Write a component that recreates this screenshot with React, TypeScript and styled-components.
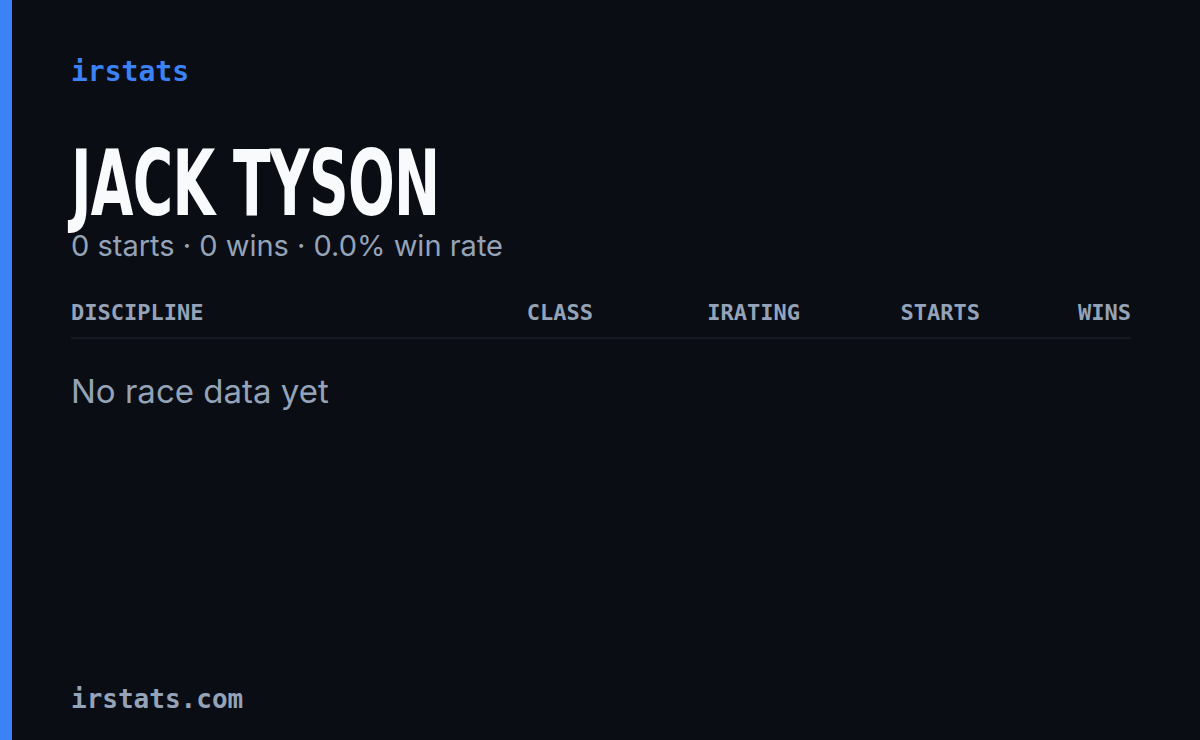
import React from 'react';
import styled, { createGlobalStyle } from 'styled-components';

const GlobalStyle = createGlobalStyle`
    html, body {
        margin: 0;
        padding: 0;
        background-color: #0a0d14;
    }
`;

const Page = styled.div`
    width: 1200px;
    height: 740px;
    display: flex;
    background-color: #0a0d14;
    overflow: hidden;
`;

const AccentBar = styled.div`
    width: 12px;
    flex-shrink: 0;
    background-color: #3b82f6;
`;

const Content = styled.div`
    flex: 1;
    display: flex;
    flex-direction: column;
    padding: 54px 69px 26px 59px;
`;

const Brand = styled.div`
    font-family: "DejaVu Sans Mono", monospace;
    font-weight: bold;
    font-size: 28px;
    color: #3b82f6;
    line-height: 36px;
`;

const Name = styled.h1`
    margin: 49px 0 0 0;
    font-family: "DejaVu Sans", sans-serif;
    font-stretch: condensed;
    font-weight: bold;
    font-size: 90px;
    line-height: 90px;
    color: #f8fafc;
    transform-origin: left center;
    transform: scaleX(0.68);
    white-space: nowrap;
    letter-spacing: -1px;
`;

const Summary = styled.div`
    font-family: Inter, sans-serif;
    font-size: 29px;
    color: #94a3b8;
    line-height: 36px;
    margin-top: -1px;
`;

const Table = styled.div`
    margin-top: 36px;
`;

const HeaderRow = styled.div`
    display: grid;
    grid-template-columns: 1fr 140px 207px 180px 151px;
    padding-bottom: 12px;
    border-bottom: 2px solid #161a24;
`;

const HeaderCell = styled.div<{ $align?: string }>`
    font-family: "DejaVu Sans Mono", monospace;
    font-weight: bold;
    font-size: 22px;
    color: #94a3b8;
    text-align: ${(p) => p.$align || 'right'};
`;

const Empty = styled.div`
    margin-top: 32px;
    font-family: Inter, sans-serif;
    font-size: 33px;
    color: #94a3b8;
`;

const Footer = styled.div`
    margin-top: auto;
    font-family: "DejaVu Sans Mono", monospace;
    font-weight: bold;
    font-size: 26px;
    color: #94a3b8;
`;

const App: React.FC = () => {
    return (
        <Page>
            <GlobalStyle />
            <AccentBar />
            <Content>
                <Brand>irstats</Brand>
                <Name>JACK TYSON</Name>
                <Summary>0 starts · 0 wins · 0.0% win rate</Summary>
                <Table>
                    <HeaderRow>
                        <HeaderCell $align="left">DISCIPLINE</HeaderCell>
                        <HeaderCell>CLASS</HeaderCell>
                        <HeaderCell>IRATING</HeaderCell>
                        <HeaderCell>STARTS</HeaderCell>
                        <HeaderCell>WINS</HeaderCell>
                    </HeaderRow>
                    <Empty>No race data yet</Empty>
                </Table>
                <Footer>irstats.com</Footer>
            </Content>
        </Page>
    );
}

export default App;
